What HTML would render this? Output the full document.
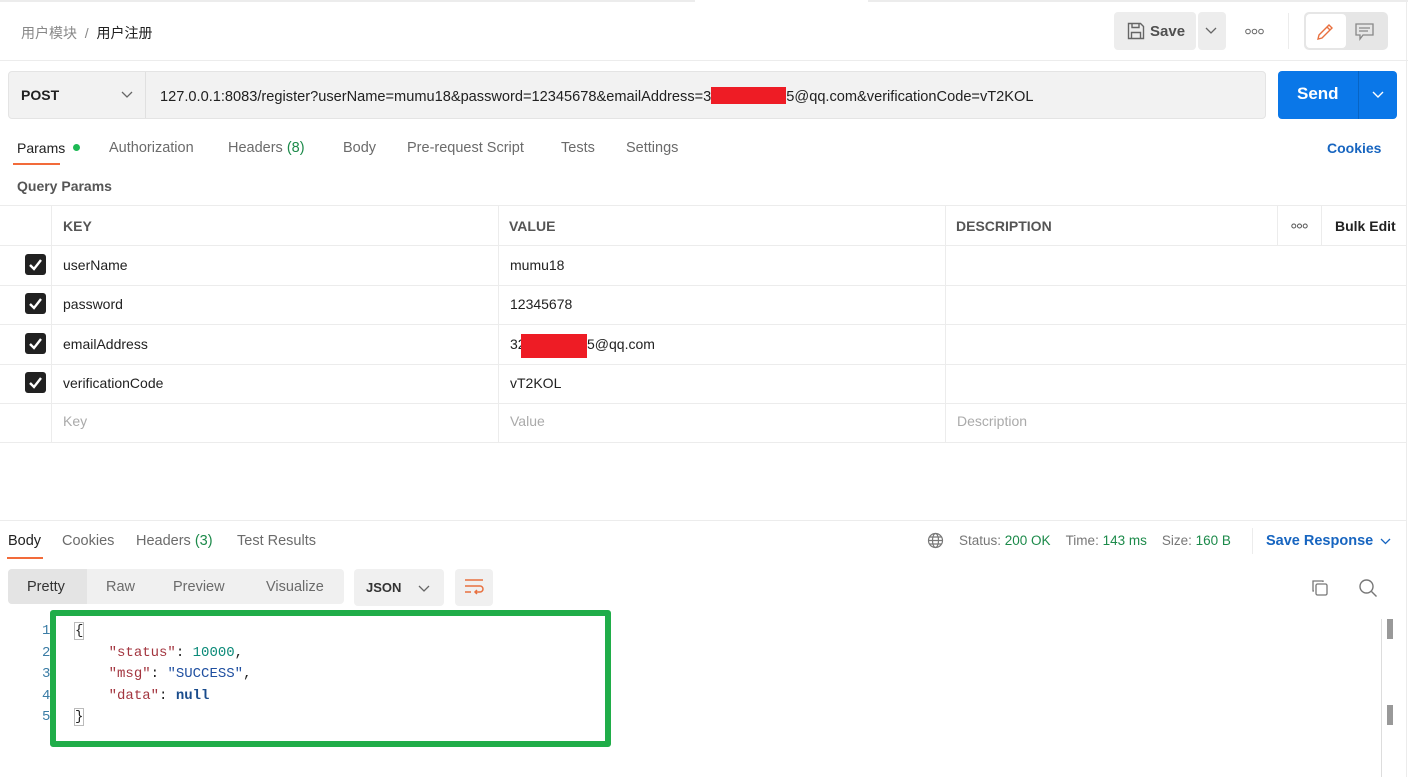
<!DOCTYPE html>
<html><head><meta charset="utf-8"><style>
*{box-sizing:border-box;margin:0;padding:0}
body{width:1415px;height:777px;background:#fff;font-family:"Liberation Sans","Noto Sans CJK SC",sans-serif;font-size:14px;color:#212121;position:relative;overflow:hidden}
.a{position:absolute;white-space:nowrap}
.g{color:#6b6b6b}
.ln{position:absolute;background:#ececec}
.cb{position:absolute;left:25px;width:21px;height:21px;background:#212121;border-radius:3px}
.cb svg{position:absolute;left:3px;top:3px}
.mono{font-family:"Liberation Mono",monospace;font-size:14px}
.dots{position:absolute;width:18px;height:6px}
</style></head><body>
<div class="ln" style="left:0;top:0;width:695px;height:2px"></div>
<div class="ln" style="left:868px;top:0;width:540px;height:2px"></div>
<div class="a" style="left:21px;top:23px;font-size:14px"><span style="color:#888">用户模块</span><span style="color:#888">&nbsp;&nbsp;/&nbsp;&nbsp;</span><span style="color:#212121">用户注册</span></div>
<div class="a" style="left:1114px;top:12px;width:82px;height:38px;background:#ededed;border-radius:4px"></div>
<svg class="a" style="left:1127px;top:22px" width="18" height="18" viewBox="0 0 18 18" fill="none" stroke="#666" stroke-width="1.4"><path d="M1.5 1.5h12l3 3v12h-15z"/><path d="M5 1.5v4h7v-4M4.5 16.5v-6h9v6"/></svg>
<div class="a" style="left:1150px;top:23px;font-size:15px;color:#505050;font-weight:bold">Save</div>
<div class="a" style="left:1198px;top:12px;width:28px;height:38px;background:#ededed;border-radius:4px"></div>
<svg class="a" style="left:1205px;top:27px" width="12" height="8"><path d="M1 1l5 5 5-5" stroke="#666" fill="none" stroke-width="1.3"/></svg>
<svg class="a" style="left:1245px;top:28px" width="19" height="7"><circle cx="3" cy="3.5" r="2.3" fill="none" stroke="#666"/><circle cx="9.5" cy="3.5" r="2.3" fill="none" stroke="#666"/><circle cx="16" cy="3.5" r="2.3" fill="none" stroke="#666"/></svg>
<div class="ln" style="left:1288px;top:13px;width:1px;height:36px"></div>
<div class="a" style="left:1304px;top:12px;width:84px;height:38px;background:#e6e6e6;border-radius:5px"></div>
<div class="a" style="left:1306px;top:14px;width:40px;height:34px;background:#fff;border-radius:4px"></div>
<svg class="a" style="left:1316px;top:22px" width="19" height="19" viewBox="0 0 19 19" fill="none" stroke="#e8703f" stroke-width="1.4"><path d="M2 17l1-4L13 3l3 3L6 16z M11 5l3 3"/></svg>
<svg class="a" style="left:1355px;top:23px" width="19" height="18" viewBox="0 0 19 18" fill="none" stroke="#888" stroke-width="1.3"><path d="M1 1h17v11H8l-3 4v-4H1z M4 5h11M4 8h9"/></svg>
<div class="ln" style="left:0;top:60px;width:1408px;height:1px"></div>
<div class="a" style="left:8px;top:71px;width:1258px;height:48px;background:#f2f2f2;border:1px solid #e4e4e4;border-radius:4px"></div>
<div class="ln" style="left:145px;top:72px;width:1px;height:46px;background:#e0e0e0"></div>
<div class="a" style="left:21px;top:87px;font-weight:bold;font-size:14px;color:#212121">POST</div>
<svg class="a" style="left:121px;top:91px" width="12" height="8"><path d="M1 1l5 5 5-5" stroke="#666" fill="none" stroke-width="1.3"/></svg>
<div class="a" style="left:160px;top:87px;font-size:14.6px;color:#212121">127.0.0.1:8083/register?userName=mumu18&amp;password=12345678&amp;emailAddress=3<span style="display:inline-block;width:75px;height:17px;vertical-align:-3px;background:#ee1c25"></span>5@qq.com&amp;verificationCode=vT2KOL</div>
<div class="a" style="left:1278px;top:71px;width:119px;height:48px;background:#0a77e8;border-radius:4px"></div>
<div class="ln" style="left:1358px;top:71px;width:1px;height:48px;background:#0764c4"></div>
<div class="a" style="left:1297px;top:84px;color:#fff;font-weight:bold;font-size:17px">Send</div>
<svg class="a" style="left:1372px;top:91px" width="12" height="8"><path d="M1 1l5 5 5-5" stroke="#fff" fill="none" stroke-width="1.4"/></svg>
<div class="a" style="left:17px;top:140px;font-size:14px;color:#212121">Params</div>
<div class="a" style="left:73px;top:144px;width:7px;height:7px;border-radius:50%;background:#1db954"></div>
<div class="a" style="left:13px;top:163px;width:47px;height:2px;background:#f26b3a"></div>
<div class="a g" style="left:109px;top:140px;font-size:14.5px">Authorization</div>
<div class="a g" style="left:228px;top:140px;font-size:14.5px">Headers <span style="color:#1c8a4a">(8)</span></div>
<div class="a g" style="left:343px;top:140px;font-size:14.5px">Body</div>
<div class="a g" style="left:407px;top:140px;font-size:14.5px">Pre-request Script</div>
<div class="a g" style="left:561px;top:140px;font-size:14.5px">Tests</div>
<div class="a g" style="left:626px;top:140px;font-size:14.5px">Settings</div>
<div class="a" style="left:1327px;top:140px;color:#1765c0;font-weight:bold">Cookies</div>
<div class="a" style="left:17px;top:178px;font-weight:bold;color:#555">Query Params</div>
<div class="ln" style="left:0;top:205px;width:1406px;height:1px"></div>
<div class="ln" style="left:0;top:245px;width:1406px;height:1px"></div>
<div class="ln" style="left:0;top:285px;width:1406px;height:1px"></div>
<div class="ln" style="left:0;top:324px;width:1406px;height:1px"></div>
<div class="ln" style="left:0;top:364px;width:1406px;height:1px"></div>
<div class="ln" style="left:0;top:403px;width:1406px;height:1px"></div>
<div class="ln" style="left:0;top:442px;width:1406px;height:1px"></div>
<div class="ln" style="left:51px;top:205px;width:1px;height:238px"></div>
<div class="ln" style="left:498px;top:205px;width:1px;height:238px"></div>
<div class="ln" style="left:945px;top:205px;width:1px;height:238px"></div>
<div class="ln" style="left:1277px;top:205px;width:1px;height:40px"></div>
<div class="ln" style="left:1321px;top:205px;width:1px;height:40px"></div>
<div class="ln" style="left:1406px;top:0;width:1px;height:777px"></div>
<div class="a" style="left:63px;top:218px;font-weight:bold;color:#555">KEY</div>
<div class="a" style="left:509px;top:218px;font-weight:bold;color:#555">VALUE</div>
<div class="a" style="left:956px;top:218px;font-weight:bold;color:#555">DESCRIPTION</div>
<svg class="a" style="left:1291px;top:223px" width="17" height="6"><circle cx="2.8" cy="3" r="2" fill="none" stroke="#555"/><circle cx="8.5" cy="3" r="2" fill="none" stroke="#555"/><circle cx="14.2" cy="3" r="2" fill="none" stroke="#555"/></svg>
<div class="a" style="left:1335px;top:218px;font-weight:bold;color:#212121">Bulk Edit</div>
<div class="cb" style="top:254px"><svg width="15" height="15"><path d="M2 8l4 4 7-9" stroke="#fff" stroke-width="2.4" fill="none"/></svg></div>
<div class="cb" style="top:293px"><svg width="15" height="15"><path d="M2 8l4 4 7-9" stroke="#fff" stroke-width="2.4" fill="none"/></svg></div>
<div class="cb" style="top:333px"><svg width="15" height="15"><path d="M2 8l4 4 7-9" stroke="#fff" stroke-width="2.4" fill="none"/></svg></div>
<div class="cb" style="top:372px"><svg width="15" height="15"><path d="M2 8l4 4 7-9" stroke="#fff" stroke-width="2.4" fill="none"/></svg></div>
<div class="a" style="left:63px;top:257px">userName</div>
<div class="a" style="left:510px;top:257px">mumu18</div>
<div class="a" style="left:63px;top:296px">password</div>
<div class="a" style="left:510px;top:296px">12345678</div>
<div class="a" style="left:63px;top:336px">emailAddress</div>
<div class="a" style="left:510px;top:336px">32</div>
<div class="a" style="left:587px;top:336px">5@qq.com</div>
<div class="a" style="left:521px;top:334px;width:66px;height:24px;background:#ee1c25"></div>
<div class="a" style="left:63px;top:375px">verificationCode</div>
<div class="a" style="left:510px;top:375px">vT2KOL</div>
<div class="a" style="left:63px;top:413px;color:#aaa">Key</div>
<div class="a" style="left:510px;top:413px;color:#aaa">Value</div>
<div class="a" style="left:957px;top:413px;color:#aaa">Description</div>
<div class="ln" style="left:0;top:520px;width:1406px;height:1px"></div>
<div class="a" style="left:8px;top:533px;color:#212121;font-size:14.5px">Body</div>
<div class="a" style="left:7px;top:557px;width:36px;height:2px;background:#f26b3a"></div>
<div class="a g" style="left:62px;top:533px;font-size:14.5px">Cookies</div>
<div class="a g" style="left:136px;top:533px;font-size:14.5px">Headers <span style="color:#1c8a4a">(3)</span></div>
<div class="a g" style="left:237px;top:533px;font-size:14.5px">Test Results</div>
<svg class="a" style="left:927px;top:532px" width="17" height="17" viewBox="0 0 17 17" fill="none" stroke="#777" stroke-width="1.2"><circle cx="8.5" cy="8.5" r="7"/><ellipse cx="8.5" cy="8.5" rx="3" ry="7"/><path d="M1.5 8.5h14M2.5 5h12M2.5 12h12"/></svg>
<div class="a" style="left:959px;top:533px;font-size:13.5px;color:#777">Status: <span style="color:#1c8a4a">200 OK</span>&nbsp;&nbsp;&nbsp;&nbsp;Time: <span style="color:#1c8a4a">143 ms</span>&nbsp;&nbsp;&nbsp;&nbsp;Size: <span style="color:#1c8a4a">160 B</span></div>
<div class="ln" style="left:1252px;top:528px;width:1px;height:26px"></div>
<div class="a" style="left:1266px;top:533px;color:#1765c0;font-weight:bold;font-size:14.5px">Save Response</div>
<svg class="a" style="left:1380px;top:538px" width="11" height="7"><path d="M1 1l4.5 4.5L10 1" stroke="#1765c0" fill="none" stroke-width="1.3"/></svg>
<div class="a" style="left:8px;top:569px;width:336px;height:35px;background:#f0f0f0;border-radius:4px"></div>
<div class="a" style="left:8px;top:569px;width:79px;height:35px;background:#e4e4e4;border-radius:4px 0 0 4px"></div>
<div class="a" style="left:27px;top:579px;color:#333;font-size:14.5px">Pretty</div>
<div class="a g" style="left:106px;top:579px;font-size:14.5px">Raw</div>
<div class="a g" style="left:173px;top:579px;font-size:14.5px">Preview</div>
<div class="a g" style="left:266px;top:579px;font-size:14.5px">Visualize</div>
<div class="a" style="left:354px;top:569px;width:90px;height:37px;background:#f0f0f0;border-radius:4px"></div>
<div class="a" style="left:366px;top:580px;font-weight:bold;font-size:13px;color:#333">JSON</div>
<svg class="a" style="left:418px;top:585px" width="12" height="8"><path d="M1 1l5 5 5-5" stroke="#666" fill="none" stroke-width="1.3"/></svg>
<div class="a" style="left:455px;top:569px;width:38px;height:37px;background:#f0f0f0;border-radius:4px"></div>
<svg class="a" style="left:464px;top:578px" width="20" height="18" viewBox="0 0 20 18" fill="none" stroke="#e8703f" stroke-width="1.5"><path d="M1 2h18M1 8h15a3 3 0 0 1 0 6h-5M13 12l-2 2 2 2M1 14h6"/></svg>
<svg class="a" style="left:1311px;top:579px" width="18" height="18" viewBox="0 0 18 18" fill="none" stroke="#777" stroke-width="1.3"><rect x="5" y="5" width="11" height="11" rx="1.5"/><path d="M3 12H2V2h10v1"/></svg>
<svg class="a" style="left:1358px;top:578px" width="20" height="20" viewBox="0 0 20 20" fill="none" stroke="#777" stroke-width="1.4"><circle cx="8.5" cy="8.5" r="6.5"/><path d="M13.5 13.5l5 5"/></svg>
<div class="ln" style="left:1381px;top:619px;width:1px;height:158px;background:#ddd"></div>
<div class="a" style="left:1387px;top:619px;width:6px;height:20px;background:#999"></div>
<div class="a" style="left:1387px;top:705px;width:6px;height:20px;background:#999"></div>
<div class="a mono" style="left:42px;top:621px;line-height:21.5px;color:#3a7ca5">1<br>2<br>3<br>4<br>5</div>
<div class="a mono" style="left:75px;top:621px;line-height:21.5px;color:#212121"><span style="outline:1px solid #bbb">{</span><br>&nbsp;&nbsp;&nbsp;&nbsp;<span style="color:#a3353f">"status"</span>: <span style="color:#0b8a78">10000</span>,<br>&nbsp;&nbsp;&nbsp;&nbsp;<span style="color:#a3353f">"msg"</span>: <span style="color:#1f4fa0">"SUCCESS"</span>,<br>&nbsp;&nbsp;&nbsp;&nbsp;<span style="color:#a3353f">"data"</span>: <b style="color:#1a4c8c">null</b><br><span style="outline:1px solid #bbb">}</span></div>
<div class="a" style="left:50px;top:610px;width:561px;height:137px;border:6px solid #20ad49;border-radius:3px"></div>
</body></html>
